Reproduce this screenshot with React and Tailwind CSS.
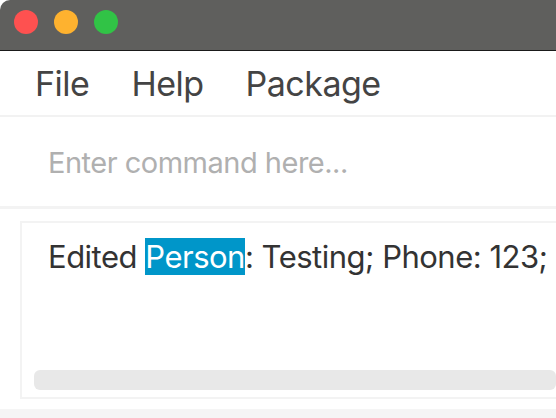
export default function App() {
  return (
    <div
      className="w-[556px] h-[418px] overflow-hidden bg-white flex flex-col"
      style={{ fontFamily: "Inter, 'Noto Sans', sans-serif" }}
    >
      {/* title bar */}
      <div className="h-[51px] shrink-0 bg-[#5f5f5d] rounded-tl-[10px] border-b border-[#1a1a1a] flex items-start gap-4 pl-[14px] pt-[10px]">
        <span className="w-6 h-6 rounded-full bg-[#fe5150]" />
        <span className="w-6 h-6 rounded-full bg-[#feb22f]" />
        <span className="w-6 h-6 rounded-full bg-[#31c346]" />
      </div>

      {/* menu */}
      <div className="h-[66px] shrink-0 border-b-2 border-[#f2f2f2] flex items-center gap-[42px] pl-[35px] text-[34px] text-[#444444] tracking-[-0.5px]">
        <span>File</span>
        <span>Help</span>
        <span>Package</span>
      </div>

      {/* command box */}
      <div className="h-[92px] shrink-0 border-b-[3px] border-[#f3f3f3] flex items-center pl-[48px] pt-[3px] text-[29px] text-[#b0b0b0] tracking-[-0.5px]">
        Enter command here...
      </div>

      {/* result display */}
      <div className="flex-1 pl-5 pt-3 pb-[10px]">
        <div className="h-full border-2 border-r-0 border-[#f3f3f3] pt-[11px] pl-[26px] flex flex-col overflow-hidden">
          <div className="whitespace-nowrap text-[31px] leading-[45px] text-[#333333] tracking-[-0.5px]">
            Edited <span className="bg-[#0096c9] text-white">Person</span>: Testing; Phone: 123; Email: test@example.com
          </div>
          <div className="mt-auto mb-[7px] -ml-[14px] h-5 rounded-[6px] bg-[#e8e8e8]" />
        </div>
      </div>

      <div className="h-[9px] shrink-0 bg-[#f5f5f5]" />
    </div>
  );
}
